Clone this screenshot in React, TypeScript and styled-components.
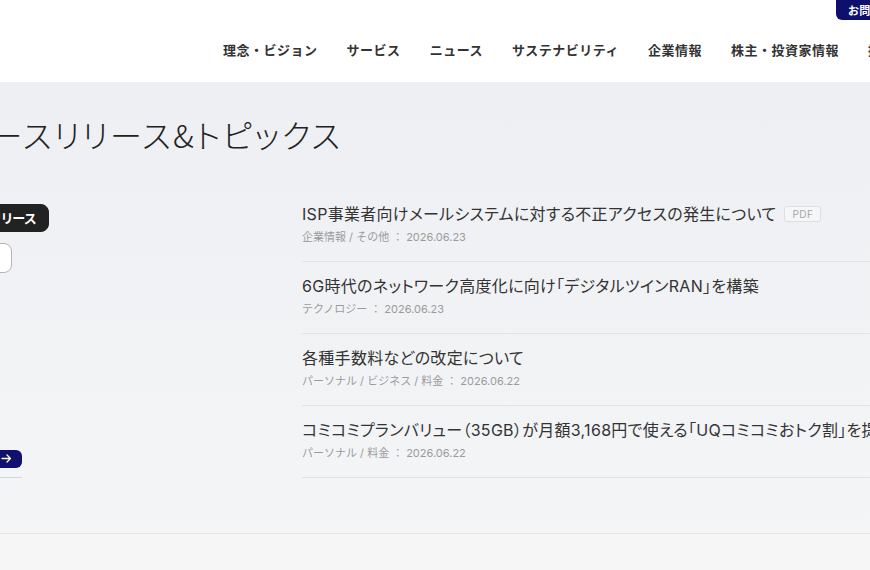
import styled, { createGlobalStyle } from "styled-components"

const GlobalStyle = createGlobalStyle`
  html, body {
    margin: 0;
    padding: 0;
    overflow: hidden;
    background: #f6f6f7;
  }
  body {
    font-family: Inter, "Noto Sans CJK JP", sans-serif;
    color: #333;
  }
  * {
    box-sizing: border-box;
  }
`

const navItems = [
  "理念・ビジョン",
  "サービス",
  "ニュース",
  "サステナビリティ",
  "企業情報",
  "株主・投資家情報",
  "採用情報",
]

const news = [
  {
    title: "ISP事業者向けメールシステムに対する不正アクセスの発生について",
    tags: "企業情報 / その他",
    date: "2026.06.23",
    pdf: true,
  },
  {
    title: "6G時代のネットワーク高度化に向け「デジタルツインRAN」を構築",
    tags: "テクノロジー",
    date: "2026.06.23",
  },
  {
    title: "各種手数料などの改定について",
    tags: "パーソナル / ビジネス / 料金",
    date: "2026.06.22",
  },
  {
    title: "コミコミプランバリュー（35GB）が月額3,168円で使える「UQコミコミおトク割」を提供開始",
    tags: "パーソナル / 料金",
    date: "2026.06.22",
  },
]

export default function App() {
  return (
    <Page>
      <GlobalStyle />
      <Header>
        <HeaderInner>
          <UtilityRow>
            <ContactButton>お問い合わせ</ContactButton>
          </UtilityRow>
          <Nav>
            {navItems.map((item) => (
              <NavItem key={item}>{item}</NavItem>
            ))}
          </Nav>
        </HeaderInner>
      </Header>

      <Main>
        <MainInner>
          <PageTitle>ニュースリリース&amp;トピックス</PageTitle>
          <Body>
            <Side>
              <CategoryList>
                <CategoryPill $active>ニュースリリース</CategoryPill>
                <CategoryPill>トピックス</CategoryPill>
              </CategoryList>
              <SideFooter>
                <MoreButton>
                  一覧を見る
                  <svg width="11" height="9" viewBox="0 0 11 9" fill="none">
                    <path d="M1 4.5h8.5M6 1l3.5 3.5L6 8" stroke="#fff" strokeWidth="1.3" strokeLinecap="round" strokeLinejoin="round" />
                  </svg>
                </MoreButton>
              </SideFooter>
            </Side>

            <NewsList>
              {news.map((n) => (
                <NewsItem key={n.title}>
                  <NewsTitle>
                    {n.title}
                    {n.pdf && <PdfBadge>PDF</PdfBadge>}
                  </NewsTitle>
                  <NewsMeta>
                    {n.tags}
                    <Colon>：</Colon>
                    {n.date}
                  </NewsMeta>
                </NewsItem>
              ))}
            </NewsList>
          </Body>
        </MainInner>
      </Main>
      <Below />
    </Page>
  )
}

const Page = styled.div`
  width: 100%;
  min-height: 570px;
  overflow: hidden;
`
const Header = styled.header`
  height: 82px;
  background: #fff;
  overflow: hidden;
`
const HeaderInner = styled.div`
  margin-right: -66px;
  display: flex;
  flex-direction: column;
  align-items: flex-end;
`
const UtilityRow = styled.div`
  height: 20px;
  display: flex;
  justify-content: flex-end;
`
const ContactButton = styled.a`
  height: 20px;
  display: flex;
  align-items: center;
  padding: 0 20px 0 12px;
  background: #0f0f6e;
  color: #fff;
  font-family: "Noto Sans CJK JP", sans-serif;
  font-size: 11px;
  font-weight: 700;
  border-radius: 0 0 6px 6px;
  letter-spacing: 0.03em;
`
const Nav = styled.nav`
  height: 58px;
  display: flex;
  align-items: center;
  gap: 29px;
  padding-right: 14px;
`
const NavItem = styled.a`
  font-family: "Noto Sans CJK JP", sans-serif;
  font-size: 13px;
  font-weight: 700;
  letter-spacing: 0.5px;
  color: #333;
  white-space: nowrap;
`
const Main = styled.main`
  background: linear-gradient(180deg, #edeff2 0%, #f4f5f7 100%);
  border-bottom: 1px solid #e3e4e6;
  padding: 32px 0 55px;
`
const MainInner = styled.div`
  margin-left: -70px;
`
const PageTitle = styled.h1`
  margin: 0 0 46px;
  font-family: "Noto Sans CJK JP", sans-serif;
  font-feature-settings: "palt";
  font-size: 32px;
  font-weight: 300;
  letter-spacing: 0.065em;
  line-height: 1.3;
  color: #222;
  white-space: nowrap;
`
const Body = styled.div`
  display: grid;
  grid-template-columns: 372px 1fr;
`
const Side = styled.div`
  display: flex;
  flex-direction: column;
  padding-top: 2px;
`
const CategoryList = styled.div`
  display: flex;
  flex-direction: column;
  align-items: flex-start;
  gap: 11px;
`
const CategoryPill = styled.button<{ $active?: boolean }>`
  height: ${({ $active }) => ($active ? "28px" : "30px")};
  padding: 0 11px;
  border-radius: 8px;
  border: 1px solid ${({ $active }) => ($active ? "#222" : "#b5b5b8")};
  background: ${({ $active }) => ($active ? "#222" : "#fff")};
  color: ${({ $active }) => ($active ? "#fff" : "#222")};
  font-family: "Noto Sans CJK JP", sans-serif;
  font-feature-settings: "palt";
  font-size: 13px;
  font-weight: 700;
  white-space: nowrap;
`
const SideFooter = styled.div`
  margin-top: auto;
  width: 92px;
  padding-bottom: 9px;
  border-bottom: 1px solid #d6d6d8;
`
const MoreButton = styled.a`
  height: 18px;
  display: flex;
  align-items: center;
  justify-content: space-between;
  padding: 0 10px 0 12px;
  border-radius: 6px;
  background: #10106e;
  color: #fff;
  font-family: "Noto Sans CJK JP", sans-serif;
  font-size: 11px;
  font-weight: 700;
`
const NewsList = styled.ul`
  list-style: none;
  margin: 0;
  padding: 0;
  overflow: hidden;
`
const NewsItem = styled.li`
  padding: 0 0 16px;
  border-bottom: 1px solid #e2e3e5;
  & + & {
    padding-top: 12px;
  }
`
const NewsTitle = styled.div`
  font-size: 16px;
  line-height: 24px;
  letter-spacing: 0.3px;
  color: #333;
  font-feature-settings: "palt";
  white-space: nowrap;
  display: flex;
  align-items: center;
`
const PdfBadge = styled.span`
  margin-left: 8px;
  padding: 0 7px;
  height: 16px;
  display: inline-flex;
  align-items: center;
  border: 1px solid #dedfe1;
  border-radius: 3px;
  background: #f5f6f7;
  color: #a5a5a8;
  font-size: 10px;
  letter-spacing: 0.05em;
`
const NewsMeta = styled.div`
  margin-top: 3px;
  font-size: 11px;
  line-height: 16px;
  color: #9b9b9e;
  white-space: nowrap;
`
const Colon = styled.span`
  margin: 0 3px;
`
const Below = styled.div`
  height: 60px;
  background: #f6f6f7;
`
